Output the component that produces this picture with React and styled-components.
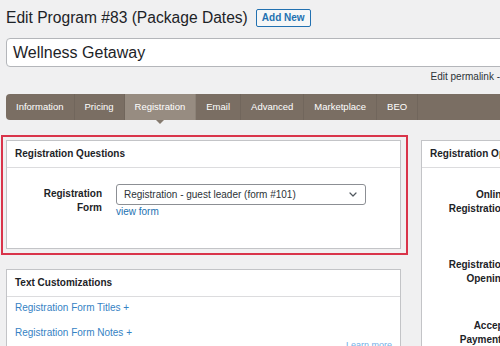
import React from "react";
import styled, { createGlobalStyle } from "styled-components";

const Global = createGlobalStyle`
  html, body { margin: 0; padding: 0; background: #f0f0f1; overflow: hidden; }
  body { font-family: "Liberation Sans", Arial, sans-serif; color: #1d2327; }
  * { box-sizing: border-box; }
`;

const Page = styled.div`
  width: 600px;
  padding: 8px 0 0 6px;
`;

const TitleRow = styled.div`
  display: flex;
  align-items: center;
  gap: 8px;
  height: 20px;
`;

const Title = styled.h1`
  margin: 0;
  font-size: 15.6px;
  line-height: 20px;
  font-weight: normal;
  color: #1d2327;
`;

const AddNew = styled.button`
  font-family: inherit;
  font-size: 10px;
  font-weight: bold;
  color: #2271b1;
  background: #f6f7f7;
  border: 1px solid #2271b1;
  border-radius: 2px;
  height: 18px;
  padding: 0 5px;
  line-height: 16px;
`;

const TitleInput = styled.div`
  margin-top: 10px;
  width: 520px;
  height: 29px;
  background: #fff;
  border: 1px solid #b4b6ba;
  border-radius: 4px;
  font-size: 16px;
  line-height: 27px;
  padding-left: 6px;
  color: #1d2327;
`;

const PermalinkRow = styled.div`
  width: 494px;
  display: flex;
  justify-content: flex-end;
  font-size: 10px;
  line-height: 12px;
  margin-top: 4px;
  color: #2c3338;
`;

const TabBar = styled.div`
  margin-top: 11px;
  display: flex;
  height: 26px;
  background: #7a6e63;
  border-radius: 4px;
  width: 560px;
`;

const Tab = styled.div`
  position: relative;
  padding: 0 10px;
  font-size: 9.5px;
  line-height: 26px;
  color: #fff;
  background: ${(p) => (p.$active ? "#978c81" : "transparent")};
  border-right: 1px solid rgba(0, 0, 0, 0.07);
  &:first-child { border-radius: 4px 0 0 4px; }
`;

const Caret = styled.span`
  position: absolute;
  left: 50%;
  bottom: -4px;
  transform: translateX(-50%);
  width: 0;
  height: 0;
  border-left: 4px solid transparent;
  border-right: 4px solid transparent;
  border-top: 4px solid #857a6f;
`;

const Columns = styled.div`
  margin-top: 20px;
  display: grid;
  grid-template-columns: 395px 200px;
  column-gap: 20px;
  align-items: start;
`;

const LeftCol = styled.div`
  display: flex;
  flex-direction: column;
  gap: 20px;
`;

const Highlight = styled.div`
  position: relative;
`;

const RedFrame = styled.div`
  position: absolute;
  top: -5px;
  left: -5px;
  right: -7px;
  bottom: -6px;
  border: 2px solid #d9344a;
  pointer-events: none;
`;

const Panel = styled.div`
  background: #fff;
  border: 1px solid #c3c4c7;
  ${(p) => (p.$tall ? "min-height: 240px;" : "")}
`;

const PanelHeader = styled.div`
  height: 27px;
  line-height: 26px;
  padding: 0 8px;
  font-size: 10px;
  font-weight: bold;
  border-bottom: 1px solid #dcdcde;
  white-space: nowrap;
`;

const FormBody = styled.div`
  display: grid;
  grid-template-columns: 95px 250px;
  column-gap: 14px;
  padding: 16px 0 30px 0;
`;

const FieldLabel = styled.div`
  text-align: right;
  font-size: 10px;
  font-weight: bold;
  line-height: 14px;
  padding-top: 3px;
`;

const FieldControl = styled.div`
  display: flex;
  flex-direction: column;
`;

const Select = styled.div`
  height: 21px;
  border: 1px solid #8c8f94;
  border-radius: 3px;
  display: flex;
  align-items: center;
  justify-content: space-between;
  padding: 0 8px 0 7px;
  font-size: 10px;
  color: #2c3338;
  background: #fff;
`;

const Link = styled.a`
  color: #2271b1;
  font-size: 10px;
  line-height: 13px;
  text-decoration: none;
`;

const TextBody = styled.div`
  padding: 4px 8px 0 8px;
  display: flex;
  flex-direction: column;
  height: 60px;
  overflow: hidden;
`;

const TextLink = styled(Link)`
  margin-bottom: 12px;
  color: #3582c4;
`;

const LearnMore = styled.div`
  margin-top: -11px;
  text-align: right;
  font-size: 9px;
  line-height: 10px;
  color: #72aee6;
`;

const OptionsBody = styled.div`
  padding-top: 20px;
  display: flex;
  flex-direction: column;
`;

const OptionRow = styled.div`
  min-height: ${(p) => p.$h}px;
`;

const OptionLabel = styled.div`
  width: 85px;
  text-align: right;
  font-size: 10px;
  font-weight: bold;
  line-height: 14px;
`;

const Chevron = () => (
  <svg width="8" height="5" viewBox="0 0 8 5" fill="none">
    <path d="M1 1l3 3 3-3" stroke="#50575e" strokeWidth="1.2" strokeLinecap="round" strokeLinejoin="round" />
  </svg>
);

const tabs = ["Information", "Pricing", "Registration", "Email", "Advanced", "Marketplace", "BEO"];

export default function App() {
  return (
    <>
      <Global />
      <Page>
        <TitleRow>
          <Title>Edit Program #83 (Package Dates)</Title>
          <AddNew>Add New</AddNew>
        </TitleRow>
        <TitleInput>Wellness Getaway</TitleInput>
        <PermalinkRow>Edit permalink -</PermalinkRow>
        <TabBar>
          {tabs.map((t) => (
            <Tab key={t} $active={t === "Registration"}>
              {t}
              {t === "Registration" && <Caret />}
            </Tab>
          ))}
        </TabBar>
        <Columns>
          <LeftCol>
            <Highlight>
              <Panel>
                <PanelHeader>Registration Questions</PanelHeader>
                <FormBody>
                  <FieldLabel>
                    Registration
                    <br />
                    Form
                  </FieldLabel>
                  <FieldControl>
                    <Select>
                      <span>Registration - guest leader (form #101)</span>
                      <Chevron />
                    </Select>
                    <Link href="#">view form</Link>
                  </FieldControl>
                </FormBody>
              </Panel>
              <RedFrame />
            </Highlight>
            <Panel>
              <PanelHeader>Text Customizations</PanelHeader>
              <TextBody>
                <TextLink href="#">Registration Form Titles +</TextLink>
                <TextLink href="#">Registration Form Notes +</TextLink>
                <LearnMore>Learn more</LearnMore>
              </TextBody>
            </Panel>
          </LeftCol>
          <Panel $tall>
            <PanelHeader>Registration Options</PanelHeader>
            <OptionsBody>
              <OptionRow $h={70}>
                <OptionLabel>
                  Online
                  <br />
                  Registration
                </OptionLabel>
              </OptionRow>
              <OptionRow $h={61}>
                <OptionLabel>
                  Registration
                  <br />
                  Opening
                </OptionLabel>
              </OptionRow>
              <OptionRow $h={40}>
                <OptionLabel>
                  Accept
                  <br />
                  Payments
                </OptionLabel>
              </OptionRow>
            </OptionsBody>
          </Panel>
        </Columns>
      </Page>
    </>
  );
}
